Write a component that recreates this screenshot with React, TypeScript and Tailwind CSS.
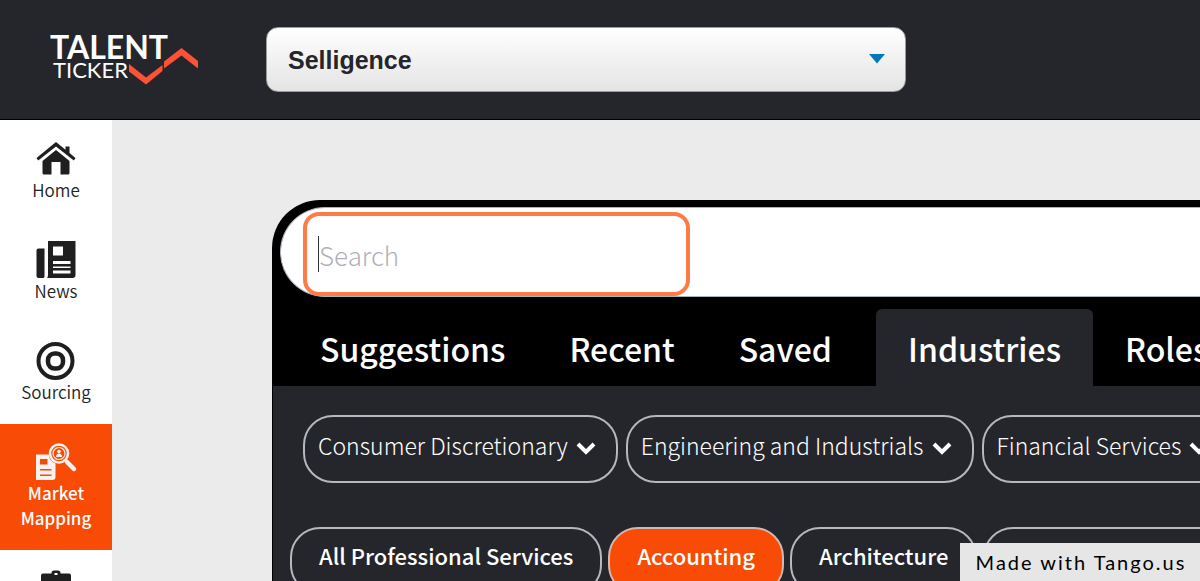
import type { ReactNode } from 'react';

const HomeIcon = () => (
  <svg viewBox="0 0 40 36" className="h-9 w-10" fill="#1f1f1f">
    <path d="M20 1 .5 17l1.700 2.500L20 5.500l17.800 14L39.500 17 33.500 12V5.500h-4v3.300z" />
    <path d="M20 9 6.500 20v12q0 1.500 1.500 1.500h7.500V21h9v12.500H32q1.500 0 1.500-1.500V20z" />
  </svg>
);

const NewsIcon = () => (
  <svg viewBox="0 0 40 36" className="h-9 w-10 overflow-visible" fill="#1f1f1f">
    <path d="M2.500 6.500h6v28q0 1.500-1.500 1.500H2.500Q.5 36 .5 34V8.500q0-2 2-2z" />
    <path
      fillRule="evenodd"
      d="M12-1h27.500v34q0 3-3 3H11q1-1 1-3zM17 4.500v9h10v-9zM17 19v3h17.500v-3zM17 24.500v1.500h17.500v-1.500zM17 28.500v3h17.500v-3z"
    />
  </svg>
);

const TargetIcon = () => (
  <svg viewBox="0 0 40 36" className="h-9 w-10 overflow-visible" fill="none" stroke="#1f1f1f">
    <circle cx="19.500" cy="18" r="17" strokeWidth="4" />
    <rect x="12" y="10.500" width="15" height="15" rx="6.500" strokeWidth="4.500" />
  </svg>
);

const MarketIcon = () => (
  <svg viewBox="0 0 40 36" className="h-9 w-10 overflow-visible">
    <path d="M0 10.500h13a10 10 0 0 0 6.500 9V33q0 3-3 3H0z" fill="#f7f2f0" />
    <path d="M4 15h7.500v5.500H4zM4 25h11.500v1.500H4zM4 30.500h11.500v1.500H4z" fill="#f84b05" />
    <circle cx="23" cy="9.500" r="9" fill="#f84b05" stroke="#f7f2f0" strokeWidth="2.500" />
    <circle cx="23" cy="9.500" r="6" fill="none" stroke="#f7f2f0" strokeWidth="1.200" />
    <circle cx="23" cy="7.500" r="1.800" fill="#f7f2f0" />
    <path d="M20 13q0-3.500 3-3.500t3 3.500z" fill="#f7f2f0" />
    <path d="m31 18 7 7" stroke="#f7f2f0" strokeWidth="4.500" strokeLinecap="round" />
  </svg>
);

const BriefcaseIcon = () => (
  <svg viewBox="0 0 40 36" className="h-9 w-10" fill="#1f1f1f">
    <path
      fillRule="evenodd"
      d="M15.500 3q0-2.500 2.500-2.500h4q2.500 0 2.500 2.500v.5H33q2 0 2 2v28H5v-28q0-2 2-2h8.500zm3 0v2h3V3z"
    />
  </svg>
);

const Chevron = () => (
  <svg viewBox="0 0 20 14" className="mt-1.5 h-[14px] w-5 shrink-0" fill="none" stroke="#fff" strokeWidth="4">
    <path d="m2 3 8 8 8-8" />
  </svg>
);

const navItems = [
  { label: 'Home', icon: HomeIcon },
  { label: 'News', icon: NewsIcon },
  { label: 'Sourcing', icon: TargetIcon },
  { label: 'Market Mapping', icon: MarketIcon, active: true },
];

const sectors = ['Consumer Discretionary', 'Engineering and Industrials', 'Financial Services'];

function Tab({ children }: { children: ReactNode }) {
  return (
    <button type="button" role="tab" aria-selected="false" className="px-8">
      {children}
    </button>
  );
}

function Logo() {
  return (
    <a href="#" aria-label="Talent Ticker" className="shrink-0">
      <svg viewBox="0 0 150 56" className="h-14 w-[150px]" fontFamily="Lato, sans-serif" fill="#fff">
        <text x="0" y="27" fontSize="32" fontWeight="700">TALENT</text>
        <text x="3" y="46" fontSize="22">TICKER</text>
        <path d="M79 32 96 45.500 112.500 33v6L96 52.500 79 39.500z" fill="#ff5038" />
        <path d="m114 29.500 17.500-13.500 16.500 13v7.500L131.500 23.500 114 36.500z" fill="#ff5038" />
      </svg>
    </a>
  );
}

export default function App() {
  return (
    <div className="relative flex h-screen flex-col overflow-hidden bg-[#ebebeb] font-['Noto_Sans_CJK_SC','Noto_Sans',sans-serif]">
      <header className="flex h-[120px] shrink-0 items-center gap-[66px] border-b border-black bg-[#25262b] pl-[50px]">
        <Logo />
        <div className="relative w-[640px]">
          <select
            aria-label="Company"
            className="block h-[65px] w-full appearance-none rounded-xl border border-[#9b9b9b] bg-linear-to-b from-white to-[#e4e4e4] px-[21px] pt-0.5 font-['Liberation_Sans',sans-serif] text-[25px] font-bold text-[#25262b]"
          >
            <option>Selligence</option>
          </select>
          <svg viewBox="0 0 18 10" className="pointer-events-none absolute top-[27px] right-5 h-[10px] w-[18px]" fill="#0079b8">
            <path d="M1 0h16L9 9.500z" />
          </svg>
        </div>
      </header>

      <div className="flex min-h-0 flex-1">
        <nav className="w-28 shrink-0 overflow-hidden bg-white pt-px">
          {navItems.map(({ label, icon: Icon, active }) => (
            <a
              key={label}
              href="#"
              className={`flex flex-col items-center px-4 py-5 text-center text-[17px] leading-[25px] ${
                active ? 'bg-[#f84b05] font-medium text-white' : 'font-[350] text-[#222]'
              }`}
            >
              <Icon />
              {label}
            </a>
          ))}
          <a href="#" aria-label="Jobs" className="flex flex-col items-center py-5">
            <BriefcaseIcon />
          </a>
        </nav>

        <main className="min-w-0 flex-1 overflow-hidden pt-20 pl-40">
          <section className="h-full overflow-hidden rounded-tl-[48px] bg-black text-white">
            {/* Search bar */}
            <div className="pt-[7px] pl-2">
              <div className="flex h-[90px] items-end rounded-l-[45px] border border-r-0 border-[#aab4bd] bg-white pl-[22px]">
                <label className="flex h-[84px] w-[387px] items-center rounded-2xl border-4 border-[#ff7a45] pl-[11px]">
                  <span className="h-9 w-px bg-[#333]" />
                  <input
                    type="text"
                    aria-label="Search"
                    placeholder="Search"
                    className="h-12 min-w-0 flex-1 text-[26px] font-light text-[#333] outline-none placeholder:text-[#b0b0ba]"
                  />
                </label>
              </div>
            </div>

            {/* Tabs */}
            <div role="tablist" className="flex h-[89px] items-stretch overflow-hidden pt-3 pl-4 text-[32px] leading-[78px] font-medium whitespace-nowrap">
              <Tab>Suggestions</Tab>
              <Tab>Recent</Tab>
              <Tab>Saved</Tab>
              <span className="mr-1 ml-2 h-6 w-px self-center bg-[#1b2a1b]" />
              <button type="button" role="tab" aria-selected="true" className="rounded-t-md bg-[#25262b] px-8">
                Industries
              </button>
              <Tab>Roles</Tab>
            </div>

            <div className="ml-px h-full bg-[#25262b]">
              <div className="flex gap-2 pt-[29px] pl-[30px]">
                {sectors.map((name) => (
                  <button
                    key={name}
                    type="button"
                    className="flex h-[68px] shrink-0 items-center gap-2 rounded-[30px] border-2 border-[#b4b9be] pr-5 pb-2 pl-[13px] text-[23px] font-light whitespace-nowrap"
                  >
                    {name}
                    <Chevron />
                  </button>
                ))}
              </div>
              <div className="flex gap-[6px] pt-11 pl-[17px] text-[22px] font-medium whitespace-nowrap">
                <button type="button" className="h-[68px] shrink-0 rounded-[30px] border-2 border-[#b4b9be] px-[27px] pb-3">
                  All Professional Services
                </button>
                <button type="button" className="h-[68px] shrink-0 rounded-[30px] border-2 border-[#d0b9b0] bg-[#f84b05] px-[27px] pb-3">
                  Accounting
                </button>
                <button type="button" className="h-[68px] shrink-0 rounded-[30px] border-2 border-[#b4b9be] px-[27px] pb-3">
                  Architecture
                </button>
                <button type="button" aria-label="More" className="h-[68px] w-72 shrink-0 rounded-[30px] border-2 border-[#b4b9be]" />
              </div>
            </div>
          </section>
        </main>
      </div>

      <div className="absolute right-0 bottom-0 flex h-[38px] w-60 items-center justify-center bg-[#e6e6e6] pl-0.5 font-['Lato',sans-serif] text-[20px] tracking-widest text-black">
        Made with Tango.us
      </div>
    </div>
  );
}
